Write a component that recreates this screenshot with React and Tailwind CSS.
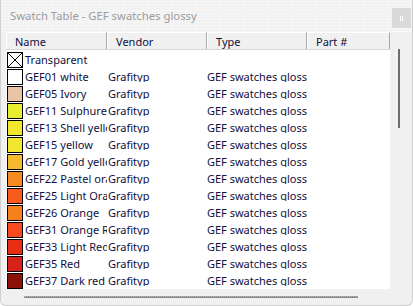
const ROWS = [
  { name: "GEF01 white", color: "#ffffff" },
  { name: "GEF05 Ivory", color: "#e9c5a6" },
  { name: "GEF11 Sulphure yellow", color: "#e6ee2e" },
  { name: "GEF13 Shell yellow", color: "#f1e82b" },
  { name: "GEF15 yellow", color: "#f1e630" },
  { name: "GEF17 Gold yellow", color: "#f4b92d" },
  { name: "GEF22 Pastel orange", color: "#f88a22" },
  { name: "GEF25 Light Orange", color: "#f85b1b" },
  { name: "GEF26 Orange", color: "#f7801f" },
  { name: "GEF31 Orange Red", color: "#f84a1f" },
  { name: "GEF33 Light Red", color: "#e82d12" },
  { name: "GEF35 Red", color: "#d8211a" },
  { name: "GEF37 Dark red", color: "#8b1109" },
];

const COLS = [
  { label: "Name", w: "w-[101px]" },
  { label: "Vendor", w: "w-[100px]" },
  { label: "Type", w: "w-[100px]" },
  { label: "Part #", w: "w-[83px]" },
];

function Header() {
  return (
    <div className="flex h-[18px] border-b border-[#d6d6d6]">
      {COLS.map((c) => (
        <div
          key={c.label}
          className={`${c.w} h-full shrink-0 flex items-center pl-[8px] bg-[#f0f0f0] border-t border-l border-t-white border-l-white border-r border-r-[#a8a8a8] text-[#101040]`}
        >
          {c.label}
        </div>
      ))}
    </div>
  );
}

function Row({ name, color, transparent }) {
  return (
    <div className="flex h-[17px] items-center text-[#101040]">
      <div className="w-[101px] shrink-0 flex items-center overflow-hidden whitespace-nowrap pl-[1px]">
        <div
          className="w-[16px] h-[16px] shrink-0 border border-black mr-[2px] flex items-center justify-center"
          style={{ backgroundColor: color }}
        >
          {transparent && (
            <svg width="14" height="14" viewBox="0 0 14 14">
              <path d="M0 0L14 14M14 0L0 14" stroke="black" strokeWidth="1" />
            </svg>
          )}
        </div>
        <span>{name}</span>
      </div>
      {!transparent && (
        <>
          <div className="w-[100px] shrink-0 overflow-hidden whitespace-nowrap pl-[1px]">
            Grafityp
          </div>
          <div className="w-[100px] shrink-0 overflow-hidden whitespace-nowrap">
            GEF swatches glossy
          </div>
        </>
      )}
    </div>
  );
}

export default function App() {
  return (
    <div className="relative w-[413px] h-[306px] overflow-hidden bg-[#f0f0f0] text-[11px] leading-none font-['Noto_Sans',sans-serif] border-l border-r border-b border-[#cfcfcf] rounded-b-[6px]">
      <div className="h-[32px] flex items-center pl-[9px] pb-[1px] bg-[#f2f2f2] bg-[radial-gradient(#ffffff_0.7px,transparent_0.8px)] bg-[length:3px_3px] text-[#9c9c9c] text-[11.3px]">
        Swatch Table - GEF swatches glossy
      </div>
      <div className="absolute right-[1px] top-[8px] w-[19px] h-[20px] bg-[#dadada] flex items-center justify-center">
        <div className="w-[3px] h-[5px] border-l border-r border-white" />
      </div>
      <div className="flex">
        <div className="ml-[5px] w-[384px] h-[257px] bg-white overflow-hidden">
          <Header />
          <div className="pt-[1px]">
            <Row name="Transparent" color="#ffffff" transparent />
            {ROWS.map((r) => (
              <Row key={r.name} name={r.name} color={r.color} />
            ))}
          </div>
        </div>
        <div className="ml-[6px] mt-[17px] w-[2px] h-[79px] border-l border-dotted border-white">
          <div className="ml-[1px] w-[2px] h-full bg-[#6e6e6e]" />
        </div>
      </div>
      <div className="ml-[23px] mt-[7px] w-[334px] h-[2px] bg-[#8a8a8a] border-t border-dotted border-[#b8b8b8]" />
    </div>
  );
}
